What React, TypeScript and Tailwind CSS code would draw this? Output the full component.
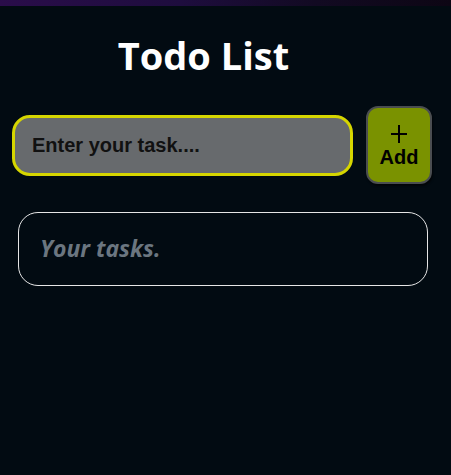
import React from "react";

export default function App() {
  return (
    <div className="w-[451px] h-[475px] bg-[#020b12] flex flex-col overflow-hidden">
      <div className="h-[6px] w-full bg-[linear-gradient(90deg,#2a0d4a_0%,#1e0d3e_40%,#120a22_70%,#0d0614_100%)]" />
      <h1 className="mt-[26px] text-center text-white font-bold text-[38px] leading-[46px] pr-[44px] [font-family:'Open_Sans',sans-serif]">
        Todo List
      </h1>
      <div className="mt-[28px] flex items-center pl-[12px]">
        <div className="w-[341px] h-[61px] rounded-[18px] border-[3px] border-[#d6d600] bg-[#676a6d] flex items-center pl-[17px] pb-[1px]">
          <span className="text-[#111] font-bold text-[20px] [font-family:'Liberation_Sans',Arial,sans-serif]">
            Enter your task....
          </span>
        </div>
        <div className="ml-[13px] w-[66px] h-[78px] rounded-[12px] border-2 border-[#4a4d50] bg-[#7a9200] flex flex-col items-center justify-center pt-[2px] shadow-[1px_2px_2px_rgba(0,0,0,0.6)]">
          <svg width="16" height="18" viewBox="0 0 16 18" className="mb-[3px]">
            <line x1="8" y1="0" x2="8" y2="18" stroke="#000" strokeWidth="2" />
            <line x1="0" y1="9" x2="16" y2="9" stroke="#000" strokeWidth="2" />
          </svg>
          <span className="text-black font-bold text-[20px] leading-[22px] [font-family:'Liberation_Sans',Arial,sans-serif]">Add</span>
        </div>
      </div>
      <div className="mt-[28px] ml-[18px] w-[410px] h-[74px] rounded-[20px] border border-[#e6e6e6] flex items-center pl-[21px] pb-[2px]">
        <span className="text-[#6b7680] italic font-bold text-[23px] [font-family:'Open_Sans',sans-serif]">
          Your tasks.
        </span>
      </div>
    </div>
  );
}
